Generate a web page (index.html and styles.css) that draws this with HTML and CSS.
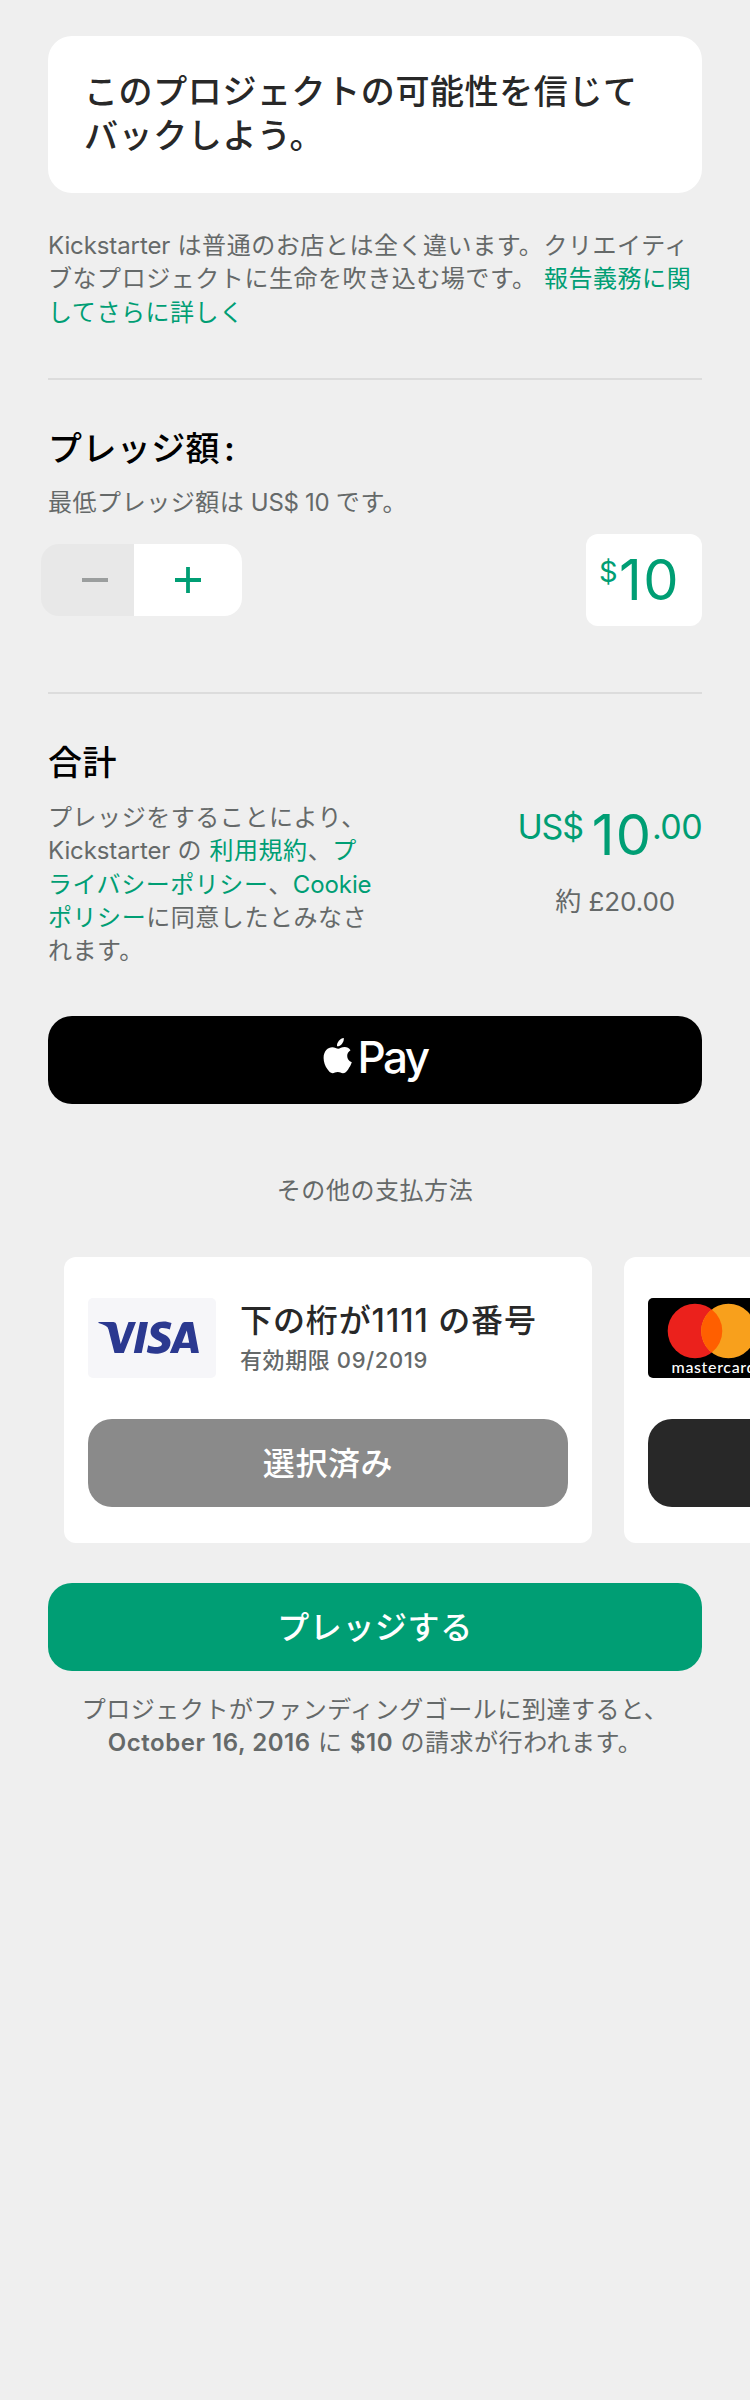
FILE: index.html
```html
<!DOCTYPE html>
<html lang="ja">
<head>
<meta charset="utf-8">
<title>プレッジ</title>
<link rel="stylesheet" href="styles.css">
</head>
<body>
<main class="page">
  <section class="hero">このプロジェクトの可能性を信じて<br>バックしよう。</section>
  <p class="note intro"><span class="latin">Kickstarter</span> は普通のお店とは全く違います。クリエイティ<br>ブなプロジェクトに生命を吹き込む場です。 <a class="link">報告義務に関<br>してさらに詳しく</a></p>

  <section class="amount">
    <h2 class="heading">プレッジ額<span class="colon">:</span></h2>
    <p class="note minimum">最低プレッジ額は<span class="money"> US$ 10 </span>です。</p>
    <div class="amount-row">
      <div class="stepper">
        <button class="step minus" aria-label="減らす"><svg width="26" height="26" viewBox="0 0 26 26"><path d="M0 13H26" stroke="#9b9e9e" stroke-width="3.8"/></svg></button>
        <button class="step plus" aria-label="増やす"><svg width="26" height="26" viewBox="0 0 26 26"><path d="M0 13H26M13 0V26" stroke="#009e74" stroke-width="3.8"/></svg></button>
      </div>
      <div class="field"><span class="field-currency">$</span><span class="field-value">10</span></div>
    </div>
  </section>

  <section class="total">
    <h2 class="heading">合計</h2>
    <div class="total-row">
      <p class="note terms">プレッジをすることにより、<br><span class="latin">Kickstarter</span> の <a class="link">利用規約</a>、<a class="link">プ<br>ライバシーポリシー</a>、<a class="link"><span class="latin">Cookie</span><br>ポリシー</a>に同意したとみなさ<br>れます。</p>
      <div class="sum">
        <div class="price"><span class="price-small currency">US$</span><span class="price-big">10</span><span class="price-small">.00</span></div>
        <div class="converted">約 £20.00</div>
      </div>
    </div>
  </section>

  <button class="button apple-pay" aria-label="Apple Pay">
    <svg class="apple" width="30" height="36" viewBox="0 0 30 36" fill="#fff"><path d="M20.8 0c.2 2.300-.6 4.300-1.900 5.900-1.300 1.600-3.100 2.500-4.900 2.400-.3-2.200.7-4.200 1.900-5.600C17.200 1.200 19.100.1 20.800 0z"/><path d="M27.500 12.200c-2.200 1.400-3.300 3.200-3.300 5.700 0 3 1.700 5.200 4.600 6.400-.8 2.500-2.100 4.800-3.700 7.100-1.600 2.300-3 3.900-5.200 3.900-2 0-2.700-1.200-5.100-1.200-2.500 0-3.300 1.200-5.200 1.200-2.200 0-3.800-2-5.300-4.200C2.200 28.100.6 24 .6 19.900c0-6.700 4.300-10.700 8.700-10.700 2.500 0 4.400 1.600 5.900 1.600 1.400 0 3.700-1.700 6.500-1.700 2.300 0 4.400 1.100 5.800 3.100z"/></svg><span class="pay">Pay</span>
  </button>

  <p class="note other">その他の支払方法</p>
</main>

<div class="cards">
  <article class="card">
    <div class="card-info">
      <svg class="brand" width="128" height="80" viewBox="0 0 128 80"><rect width="128" height="80" rx="5" fill="#f6f6f9"/><g fill="#2b3990"><path d="M10.500 24H25.500Q28 24 28.500 26.700L32.700 46 40.500 24H48L35.800 55H26.500L20.500 31.500Q20 29 17.500 27.700 14.500 26 10.500 25z"/><path d="M52 24H60L53.700 55H45.800z"/><path d="M83.500 25 81.800 31.500C79 30.300 71 28.700 70.900 32.500 70.900 36 82.500 36.400 82.500 44.400 82.500 53.200 74 55.700 67.500 55.700 63.700 55.700 61 54.900 58.800 54L60.200 47.200C63.800 49.100 73.900 50.700 74 45.800 74 42.200 62.600 41.500 62.600 33.700 62.600 23.600 75.500 21.500 83.500 25z"/><path fill-rule="evenodd" d="M96.500 24H105L110.900 55H103.200L102.300 50H91.800L89.800 55H81.800L93.500 26.500Q94.500 24 96.500 24zM98.800 32.500 94 44.700H101.200z"/></g></svg>
      <div class="card-text">
        <div class="card-title">下の桁が<span class="digits">1111</span> の番号</div>
        <div class="card-date">有効期限 09/2019</div>
      </div>
    </div>
    <button class="button selected">選択済み</button>
  </article>
  <article class="card">
    <div class="card-info">
      <svg class="brand" width="128" height="80" viewBox="0 0 128 80"><rect width="128" height="80" rx="5" fill="#000"/><circle cx="47" cy="33" r="27.300" fill="#eb211c"/><circle cx="80.500" cy="33" r="27.300" fill="#f8a01c"/><path d="M63.750 11.440A27.300 27.300 0 0 1 63.750 54.560A27.300 27.300 0 0 1 63.750 11.440z" fill="#ff5f00"/><text class="mc-name" x="23.500" y="74.500" textLength="84">mastercard</text></svg>
    </div>
    <button class="button select"></button>
  </article>
</div>

<footer class="page">
  <button class="button pledge">プレッジする</button>
  <p class="note charge">プロジェクトがファンディングゴールに到達すると、<br><b class="date">October 16, 2016</b> に <b>$10</b> の請求が行われます。</p>
</footer>
</body>
</html>
```
FILE: styles.css
```css
* { box-sizing: border-box; }
body {
  margin: 0;
  height: 2400px;
  overflow: hidden;
  background: #efefef;
  font-family: Inter, "Noto Sans CJK JP", sans-serif;
}
p, h2 { margin: 0; }
button { border: 0; padding: 0; margin: 0; font: inherit; }
.page { padding: 0 48px; white-space: nowrap; }
main.page { padding-top: 36px; }

.hero {
  height: 157px;
  padding: 34px 36px 0;
  border-radius: 24px;
  background: #fff;
  color: #282828;
  font-size: 34px;
  font-weight: 500;
  line-height: 44px;
  letter-spacing: .6px;
}
.note {
  color: #656969;
  font-size: 24px;
  font-weight: 400;
  line-height: 33.3px;
  letter-spacing: .55px;
}
.link { color: #009e74; }
.latin { letter-spacing: -.1px; }
.money { letter-spacing: -.3px; }
.intro { height: 185px; padding-top: 36px; }

.amount, .total { border-top: 2px solid #dcdcdc; }
.amount { height: 314px; }
.heading {
  color: #000;
  font-size: 34px;
  font-weight: 500;
  line-height: 44px;
  letter-spacing: .4px;
}
.amount .heading { padding-top: 47px; }
.colon { margin-left: 4px; font-weight: 600; }
.minimum { padding-top: 15px; }
.amount-row {
  display: flex;
  align-items: center;
  justify-content: space-between;
  margin: 15px 0 0 -7px;
}
.stepper {
  display: flex;
  width: 201px;
  height: 72px;
  border-radius: 18px;
  overflow: hidden;
}
.step { display: flex; align-items: center; }
.minus { width: 93px; padding-left: 41px; background: #e8e8e8; }
.plus { width: 108px; padding-left: 41px; background: #fff; }
.field {
  display: flex;
  width: 116px;
  height: 92px;
  padding: 14px 0 0 13px;
  border-radius: 12px;
  background: #fff;
  color: #009e74;
}
.field-currency {
  width: 20px;
  height: 60px;
  margin-top: -6px;
  font-size: 29px;
  line-height: 60px;
}
.field-value { font-size: 56px; line-height: 64px; letter-spacing: 1.5px; }

.total { height: 324px; }
.total .heading { padding-top: 47px; }
.total-row { display: flex; justify-content: space-between; }
.terms { padding-top: 16px; }
.sum { width: 190px; }
.price {
  display: flex;
  justify-content: flex-end;
  padding-top: 20px;
  color: #009e74;
}
.price-small { font-size: 34px; line-height: 44px; letter-spacing: -.6px; }
.currency { margin-right: 9px; letter-spacing: -1.2px; }
.price-big { font-size: 56px; line-height: 68px; letter-spacing: 1px; margin-top: -4px; }
.converted {
  padding: 13px 27px 0 0;
  color: #656969;
  font-size: 26px;
  line-height: 40px;
  letter-spacing: -.1px;
  text-align: right;
}

.button {
  display: flex;
  align-items: center;
  justify-content: center;
  width: 100%;
  height: 88px;
  padding-bottom: 4px;
  border-radius: 24px;
  color: #fff;
  font-size: 32px;
  font-weight: 500;
  letter-spacing: .6px;
}
.apple-pay { background: #000; gap: 5px; }
.apple { margin-top: -5px; }
.pay {
  margin-top: -2px;
  font-size: 44px;
  font-weight: 500;
  line-height: 60px;
  letter-spacing: -2.6px;
}
.other { padding-top: 70px; height: 153px; text-align: center; }

.cards {
  display: flex;
  gap: 32px;
  padding-left: 64px;
  overflow: hidden;
  white-space: nowrap;
}
.card {
  flex: none;
  width: 528px;
  height: 286px;
  padding: 41px 24px 0;
  border-radius: 12px;
  background: #fff;
}
.card-info { display: flex; gap: 24px; height: 121px; }
.brand { display: block; }
.card-title {
  padding-top: 1px;
  color: #282828;
  font-size: 32px;
  font-weight: 500;
  line-height: 44px;
  letter-spacing: .9px;
}
.digits { letter-spacing: 1px; }
.card-date {
  padding-top: 1px;
  color: #656969;
  font-size: 22px;
  font-weight: 500;
  line-height: 32px;
  letter-spacing: .6px;
}
.selected { background: #8a8a8a; }
.select { background: #282828; }
.mc-name { font: 500 16px Lato, sans-serif; fill: #fff; }

footer.page { padding-top: 40px; }
.pledge { background: #009e74; }
.charge { padding-top: 22px; text-align: center; }
.charge b { font-weight: 600; }
```
